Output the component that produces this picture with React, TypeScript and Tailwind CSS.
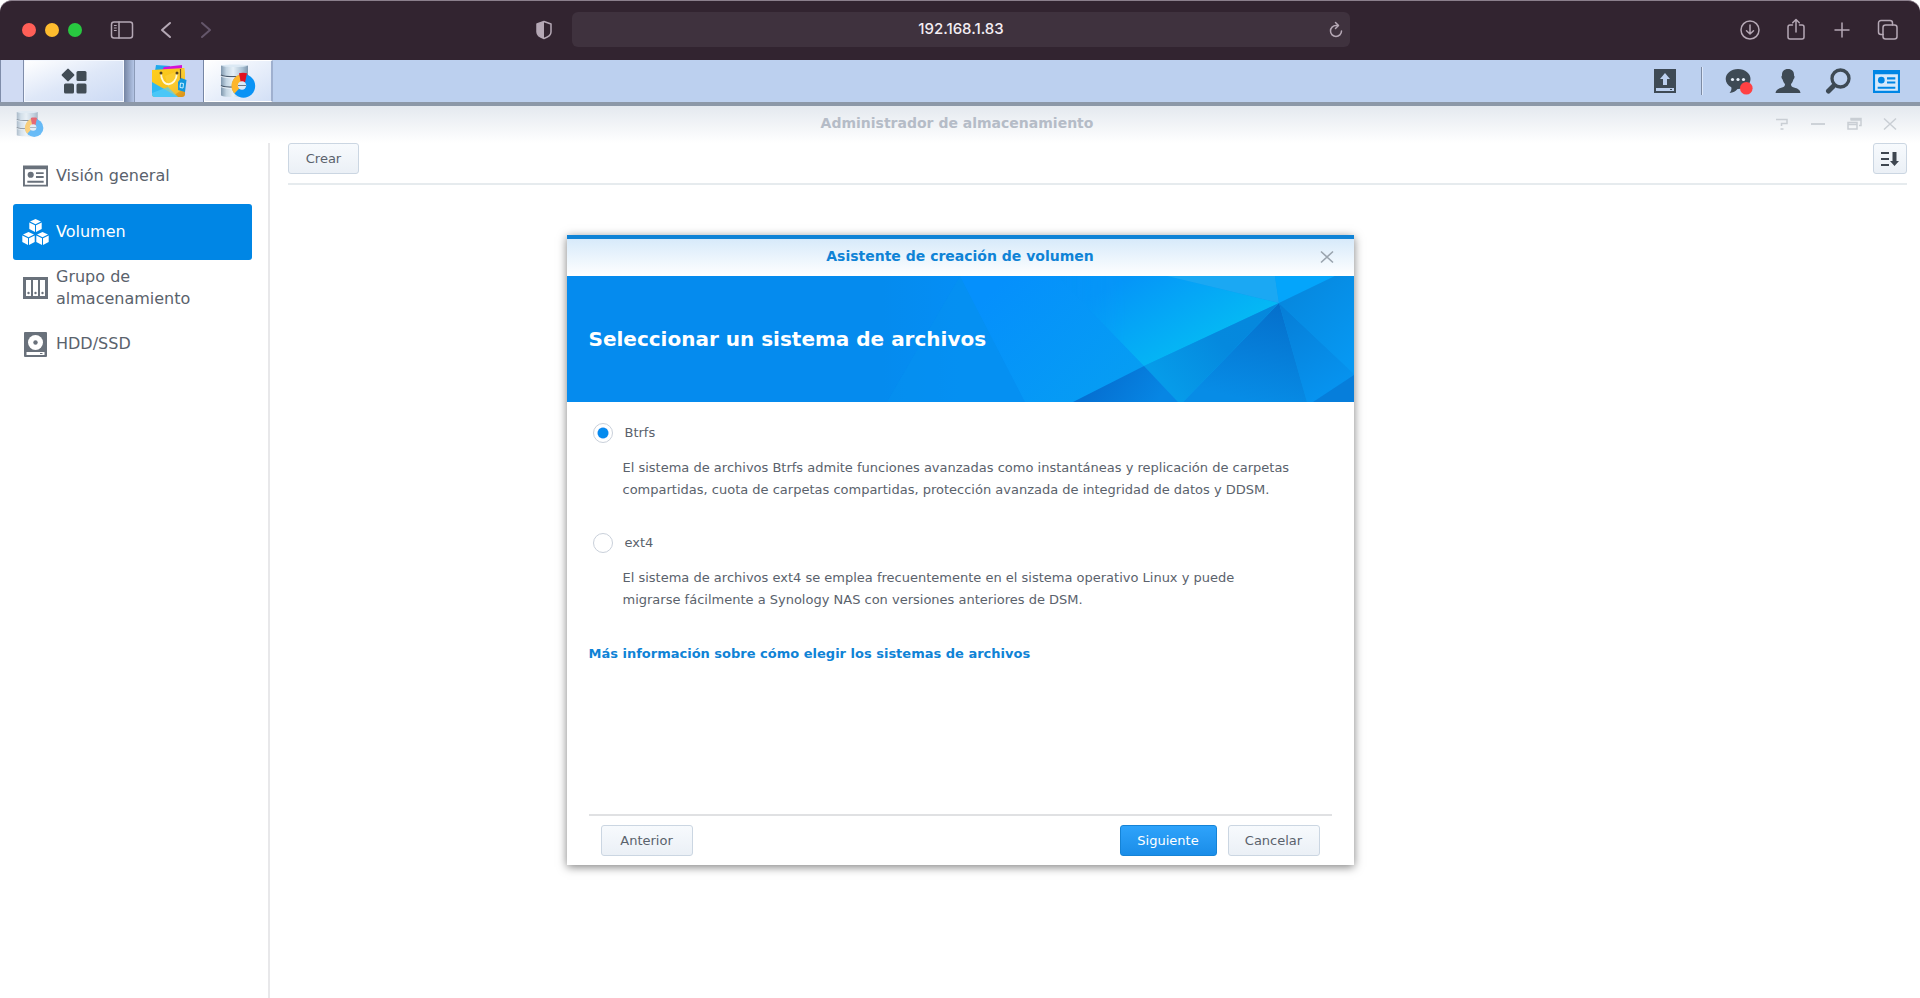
import { Fragment, useState } from "react";
import type { ReactNode } from "react";

const iconStroke = {
  fill: "none",
  stroke: "#b5a8b5",
  strokeWidth: 1.5,
  strokeLinecap: "round" as const,
  strokeLinejoin: "round" as const,
};

function StorageIcon({ className }: { className: string }) {
  return (
    <svg viewBox="0 0 36 36" className={className} aria-hidden="true">
      <defs>
        <linearGradient id="cyl" x1="0" x2="1" y1="0" y2="0">
          <stop offset="0" stopColor="#7f97ad" />
          <stop offset="0.2" stopColor="#c3d5e3" />
          <stop offset="0.45" stopColor="#e6f0f7" />
          <stop offset="0.8" stopColor="#a9c0d3" />
          <stop offset="1" stopColor="#7d95ab" />
        </linearGradient>
      </defs>
      <path d="M1 2.500v30c3 2 24 2 27 0v-30z" fill="url(#cyl)" />
      <path d="M1 2.500c3 2 24 2 27 0-3-1.500-24-1.500-27 0z" fill="#dbe9f4" />
      <path d="M1 12c3 2.200 24 2.200 27 0M1 22.500c3 2.200 24 2.200 27 0" fill="none" stroke="#4c5b6c" strokeWidth="1.300" />
      <path d="M1 13.200c3 2.200 24 2.200 27 0M1 23.700c3 2.200 24 2.200 27 0" fill="none" stroke="#f2f8fc" strokeWidth="0.800" />
      <circle cx="23.500" cy="23" r="11.700" fill="#0a93f5" />
      <path d="M22 22.500 19.500 11.500C15 13 11 18 11.500 24c.2 3 1.500 5 3 6.500z" fill="#fdb62c" />
      <path d="M20.800 19.500 19 10.300c2.500-.7 5.500-.7 8 0l-2 9.200z" fill="#e3101f" />
      <circle cx="22" cy="22.500" r="4.200" fill="#dce9f6" />
      <path d="M18 22.500h8" stroke="#4c5b6c" strokeWidth="0.800" />
    </svg>
  );
}

function PackageIcon() {
  return (
    <svg viewBox="0 0 36 36" className="size-9" aria-hidden="true">
      <defs>
        <linearGradient id="bag" x1="0" x2="1" y1="0" y2="1">
          <stop offset="0" stopColor="#ffcf1b" />
          <stop offset="0.55" stopColor="#f6c21f" />
          <stop offset="1" stopColor="#d98f1b" />
        </linearGradient>
      </defs>
      <path d="M5 2l14 1v5H4z" fill="#1fa9ec" />
      <path d="M13 4l18-2v7H10z" fill="#d312d8" />
      <path d="M1 7l32-2 1 5v21a3 3 0 0 1-3 3H4a3 3 0 0 1-3-3z" fill="url(#bag)" />
      <path d="M14 13 34 5v20L20 34z" fill="#ffd23a" opacity="0.600" />
      <path d="M1 19l26 15H4a3 3 0 0 1-3-3z" fill="#2fb9f3" />
      <path d="M1 30l16-6 10 10H4a3 3 0 0 1-3-3z" fill="#56cdf8" opacity="0.700" />
      <path d="M10 10c0 15 15 15 16 0" fill="none" stroke="#fff9dc" strokeWidth="1.800" strokeLinecap="round" />
      <circle cx="10" cy="10" r="1.500" fill="#53411d" />
      <circle cx="26" cy="10" r="1.500" fill="#53411d" />
      <path d="M29.500 6v10" stroke="#6d5322" strokeWidth="1.200" />
      <path d="M27 19l3-4 5.500 2L34 29l-7-2z" fill="#1297dd" />
      <path d="M29.500 20l3 .5-.5 4.500-3-.5z" fill="none" stroke="#c9efff" />
    </svg>
  );
}

function BrowserBar() {
  return (
    <header className="flex h-[60px] items-center rounded-t-[12px] border-t border-[#8b7f8c] bg-[#322430] pb-0.5">
      <div className="flex flex-1 items-center pl-[22px]">
        <div className="flex gap-[9px]">
          <span className="size-[14px] rounded-full bg-[#ff5f57]" />
          <span className="size-[14px] rounded-full bg-[#febc2e]" />
          <span className="size-[14px] rounded-full bg-[#28c840]" />
        </div>
        <button type="button" aria-label="Barra lateral" className="ml-7">
          <svg viewBox="0 0 24 20" className="h-5 w-6" {...iconStroke}>
            <rect x="1.500" y="2" width="21" height="16" rx="2.500" />
            <path d="M9 2v16" />
            <path d="M4.300 5.500h2M4.300 8h2M4.300 10.500h2" strokeWidth="1" />
          </svg>
        </button>
        <button type="button" aria-label="Atrás" className="ml-6">
          <svg viewBox="0 0 16 20" className="h-5 w-4" {...iconStroke} strokeWidth="2">
            <path d="M12 3 4 10l8 7" />
          </svg>
        </button>
        <button type="button" aria-label="Adelante" className="ml-6">
          <svg viewBox="0 0 16 20" className="h-5 w-4" {...iconStroke} stroke="#64566a" strokeWidth="2">
            <path d="M4 3l8 7-8 7" />
          </svg>
        </button>
        <button type="button" aria-label="Privacidad" className="mr-5 ml-auto">
          <svg viewBox="0 0 16 20" className="h-5 w-4" {...iconStroke}>
            <path d="M8 1.500 15 4v8c0 3-4 5.500-7 6.500C5 17.500 1 15 1 12V4z" />
            <path d="M8 1.500V18.500C5 17.500 1 15 1 12V4z" fill="#b5a8b5" stroke="none" />
          </svg>
        </button>
      </div>
      <div className="flex h-[35px] w-[40.5%] items-center rounded-md bg-[#3f323e] px-[6px]">
        <input
          type="text"
          aria-label="Dirección"
          defaultValue="192.168.1.83"
          className="ml-4 min-w-0 flex-1 bg-transparent text-center font-[Inter,sans-serif] text-[15px] font-medium text-[#f3edf3] outline-none"
        />
        <button type="button" aria-label="Volver a cargar">
          <svg viewBox="0 0 16 18" className="h-[18px] w-4" {...iconStroke}>
            <path d="M13.500 10A5.500 5.500 0 1 1 8 4.500h2" />
            <path d="M7.500 1.500l3 3-3 3" />
          </svg>
        </button>
      </div>
      <div className="mr-[-4px] flex flex-1 items-center justify-end gap-[22px] pr-6">
        <button type="button" aria-label="Descargas">
          <svg viewBox="0 0 24 24" className="size-6" {...iconStroke}>
            <circle cx="12" cy="12" r="9" />
            <path d="M12 7v9M8.500 12.700 12 16l3.500-3.300" />
          </svg>
        </button>
        <button type="button" aria-label="Compartir">
          <svg viewBox="0 0 24 24" className="size-6" {...iconStroke}>
            <path d="M8.500 7H6a2 2 0 0 0-2 2v10a2 2 0 0 0 2 2h12a2 2 0 0 0 2-2V9a2 2 0 0 0-2-2h-2.500" />
            <path d="M12 14V1.500M8.700 4.700 12 1.500l3.300 3.200" />
          </svg>
        </button>
        <button type="button" aria-label="Pestaña nueva">
          <svg viewBox="0 0 24 24" className="size-6" {...iconStroke}>
            <path d="M12 5v14M5 12h14" />
          </svg>
        </button>
        <button type="button" aria-label="Pestañas">
          <svg viewBox="0 0 24 24" className="size-6" {...iconStroke}>
            <rect x="7" y="7" width="14" height="14" rx="2.500" />
            <path d="M7 16.500H5A2.500 2.500 0 0 1 2.500 14V5A2.500 2.500 0 0 1 5 2.500h9A2.500 2.500 0 0 1 16.500 5v2" />
          </svg>
        </button>
      </div>
    </header>
  );
}

function CardIcon({ className }: { className: string }) {
  return (
    <svg viewBox="0 0 26 22" className={className} fill="currentColor" aria-hidden="true">
      <path fillRule="evenodd" d="M0 0h26v22H0zM2 4v16h22V4z" />
      <circle cx="8" cy="9.700" r="3.200" />
      <path d="M13.500 7h8v2h-8zM13.500 11h8v2h-8zM4.500 16h17v2h-17z" />
    </svg>
  );
}

function Taskbar() {
  return (
    <nav className="flex h-[46px] items-stretch border-b-4 border-[#8c98a8] bg-[#bcd0ef]">
      <div className="w-6 border-x border-[#7f8daa] bg-[#d0dbf3]" />
      <button
        type="button"
        aria-label="Menú principal"
        className="flex w-[100px] items-center justify-center border border-[#f4f8ff] bg-linear-to-br from-white via-[#dfe8f8] to-[#ccdaf4]"
      >
        <svg viewBox="0 0 26 26" className="size-[26px]" fill="#414c55" aria-hidden="true">
          <rect x="2.200" y="2.200" width="9.600" height="9.600" rx="1" transform="rotate(45 7 7)" />
          <rect x="15.500" y="3" width="10" height="10" rx="1.500" />
          <rect x="3" y="15.500" width="10" height="10" rx="1.500" />
          <rect x="15.500" y="15.500" width="10" height="10" rx="1.500" />
        </svg>
      </button>
      <div className="w-[11px] border-r border-[#8c9bb8] bg-linear-to-r from-[#7585a3] to-[#b4c5e6]" />
      <button
        type="button"
        aria-label="Centro de paquetes"
        className="flex w-[69px] items-center justify-center border-r border-[#7686a5] bg-[#c8d5f2]"
      >
        <PackageIcon />
      </button>
      <button
        type="button"
        aria-label="Administrador de almacenamiento"
        className="flex w-[69px] items-center justify-center border border-r-2 border-white border-r-[#9fb0cf] bg-linear-to-br from-white to-[#d3e0f6]"
      >
        <StorageIcon className="size-9" />
      </button>
      <div className="ml-auto flex items-center pr-5 text-[#3e4a55]">
        <button type="button" aria-label="Cargas">
          <svg viewBox="0 0 24 26" className="h-[26px] w-6" fill="currentColor" aria-hidden="true">
            <path
              fillRule="evenodd"
              d="M1 1h22v24H1zM12 5l-5 6h3v6h4v-6h3zM3 20v3h18v-3zM17 21h2v1h-2z"
            />
          </svg>
        </button>
        <span className="mr-[22px] ml-6 h-7 w-0.5 border-r border-[#dde8fa] bg-[#7d8ba3]" />
        <button type="button" aria-label="Notificaciones">
          <svg viewBox="0 0 28 28" className="size-7" aria-hidden="true">
            <path d="M13 2C6 2 .7 6.500.7 12c0 3.600 2.200 6.500 5.600 8.300.6 2.200-.3 4-1.800 5.700 3.600-.3 6.300-1.800 8-4 7.400.2 13-4.200 13-10C25.500 6.500 20 2 13 2z" fill="currentColor" />
            <circle cx="7.500" cy="12.500" r="1.600" fill="#e8f0fb" />
            <circle cx="13" cy="12.500" r="1.600" fill="#e8f0fb" />
            <circle cx="18.500" cy="12.500" r="1.600" fill="#e8f0fb" />
            <circle cx="21.300" cy="21.300" r="6.300" fill="#ff4143" />
          </svg>
        </button>
        <button type="button" aria-label="Usuario" className="ml-[22px]">
          <svg viewBox="0 0 26 26" className="size-[26px]" fill="currentColor" aria-hidden="true">
            <path d="M13 1c4.400 0 6.300 2.700 6 6.800.9.200.7 2.500-.6 3.700-.6 2.200-1.400 3.700-2.400 4.500 0 2 .6 2.700 3 3.500 3.700 1.200 6 2 6.500 5.500H.5c.5-3.500 2.800-4.300 6.500-5.500 2.400-.8 3-1.500 3-3.500-1-.8-1.800-2.300-2.400-4.500-1.300-1.200-1.500-3.500-.6-3.700C6.700 3.700 8.600 1 13 1z" />
          </svg>
        </button>
        <button type="button" aria-label="Buscar" className="ml-6">
          <svg viewBox="0 0 26 26" className="size-[26px]" fill="none" stroke="currentColor" aria-hidden="true">
            <circle cx="15.500" cy="10.500" r="8.500" strokeWidth="3.300" />
            <path d="M9.500 16.500 7.500 18.500" strokeWidth="3" />
            <path d="M8 18.500 3.500 23" strokeWidth="5" strokeLinecap="round" />
          </svg>
        </button>
        <button type="button" aria-label="Widgets" className="ml-[22px] text-[#0086e5]">
          <CardIcon className="h-[23px] w-[27px] bg-[#d6e9fb]" />
        </button>
      </div>
    </nav>
  );
}

function WindowTitle() {
  return (
    <div className="flex h-[37px] shrink-0 items-center bg-linear-to-b from-[#e4e9ef] to-white px-4 pb-0.5">
      <div className="flex-1">
        <StorageIcon className="size-[28px] opacity-60" />
      </div>
      <h1 className="text-[14px] font-bold text-[#b5bcc7]">Administrador de almacenamiento</h1>
      <div className="flex flex-1 items-center justify-end gap-5 pr-[6px] text-[#c9ced4]">
        <button type="button" aria-label="Ayuda">
          <svg viewBox="0 0 16 16" className="size-4" fill="none" stroke="currentColor" strokeWidth="1.500">
            <path d="M2 3.500h11v4H7.500V10M6.500 13h3" />
          </svg>
        </button>
        <button type="button" aria-label="Minimizar">
          <svg viewBox="0 0 16 16" className="size-4" stroke="currentColor" strokeWidth="1.800">
            <path d="M1 8h14" />
          </svg>
        </button>
        <button type="button" aria-label="Restaurar">
          <svg viewBox="0 0 16 16" className="size-4" fill="none" stroke="currentColor" strokeWidth="1.500">
            <path d="M2 6.500h9V13H2zM2 8.500h9M5 4.500V2.500h10v7h-2M5 4h10" />
          </svg>
        </button>
        <button type="button" aria-label="Cerrar">
          <svg viewBox="0 0 16 16" className="size-4" stroke="currentColor" strokeWidth="1.500">
            <path d="M2 2.500l12 11M14 2.500l-12 11" />
          </svg>
        </button>
      </div>
    </div>
  );
}

function Cube({ x, y }: { x: number; y: number }) {
  return (
    <g transform={`translate(${x} ${y})`}>
      <path d="M6.500 0 12 2.600 6.500 5.300 1 2.600z" />
      <path d="M.3 3.600 6 6.300v6.700L.3 10zM12.700 3.600 7 6.300v6.700l5.700-3z" />
    </g>
  );
}

const navIcons: Record<string, ReactNode> = {
  overview: <CardIcon className="h-[22px] w-[25px]" />,
  volume: (
    <svg viewBox="0 0 27 27" className="size-[27px]" fill="currentColor" aria-hidden="true">
      <Cube x={7} y={0} />
      <Cube x={0} y={13} />
      <Cube x={14} y={13} />
    </svg>
  ),
  group: (
    <svg viewBox="0 0 25 22" className="h-[22px] w-[25px]" fill="currentColor" aria-hidden="true">
      <path fillRule="evenodd" d="M0 0h25v22H0zM3 3v16h5V3zM10 3v16h5V3zM17 3v16h5V3z" />
      <circle cx="5.500" cy="16" r="1.200" />
      <circle cx="12.500" cy="16" r="1.200" />
      <circle cx="19.500" cy="16" r="1.200" />
    </svg>
  ),
  disk: (
    <svg viewBox="0 0 23 25" className="h-[25px] w-[23px]" aria-hidden="true">
      <rect width="23" height="25" rx="1" fill="currentColor" />
      <circle cx="11.500" cy="10.500" r="7.500" fill="#fff" />
      <circle cx="11.500" cy="10.500" r="2.200" fill="currentColor" />
      <path d="M2.500 20h18v3h-18z" fill="#fff" />
      <path d="M16 21h2.500v1H16z" fill="currentColor" />
    </svg>
  ),
};

const navItems = [
  { id: "overview", label: "Visión general" },
  { id: "volume", label: "Volumen" },
  { id: "group", label: "Grupo de almacenamiento" },
  { id: "disk", label: "HDD/SSD" },
];

function Sidebar() {
  return (
    <aside className="w-[270px] shrink-0 border-r-2 border-[#e8e8ea] pt-[5px] pr-4 pl-[13px]">
      {navItems.map((item) => (
        <a
          key={item.id}
          href={`#${item.id}`}
          aria-current={item.id === "volume" ? "page" : undefined}
          className="group flex h-14 items-center rounded-[3px] px-[9px] text-[16px] leading-[22px] text-[#5a626c] aria-[current]:bg-[#0086e5] aria-[current]:text-white"
        >
          <span className="flex w-[27px] shrink-0 justify-center text-[#69717b] group-aria-[current]:text-white">
            {navIcons[item.id]}
          </span>
          <span className="ml-[7px] w-[150px]">{item.label}</span>
        </a>
      ))}
    </aside>
  );
}

const plainButton =
  "h-[31px] rounded-[3px] border border-[#cbd6e2] bg-linear-to-b from-[#f7fafd] to-[#ebf0f6] text-[13px] text-[#5a626c]";

function BannerArt() {
  return (
    <svg
      viewBox="0 0 787 126"
      preserveAspectRatio="xMaxYMid slice"
      className="absolute inset-0 size-full"
      aria-hidden="true"
    >
      <defs>
        <linearGradient id="base" x1="0" x2="1" y1="0" y2="0">
          <stop offset="0" stopColor="#058bee" />
          <stop offset="0.400" stopColor="#058bee" />
          <stop offset="0.500" stopColor="#058ef5" />
          <stop offset="1" stopColor="#0590f5" />
        </linearGradient>
        <linearGradient id="mid" gradientUnits="userSpaceOnUse" x1="440" y1="0" x2="560" y2="126">
          <stop offset="0" stopColor="#0590fc" />
          <stop offset="1" stopColor="#069ef2" />
        </linearGradient>
        <linearGradient id="glow" gradientUnits="userSpaceOnUse" x1="560" y1="0" x2="610" y2="85">
          <stop offset="0" stopColor="#0595f8" />
          <stop offset="1" stopColor="#05b8f4" />
        </linearGradient>
        <linearGradient id="fade" gradientUnits="userSpaceOnUse" x1="490" y1="0" x2="560" y2="0">
          <stop offset="0" stopColor="#000" />
          <stop offset="1" stopColor="#fff" />
        </linearGradient>
        <mask id="glowMask">
          <rect x="400" width="387" height="126" fill="url(#fade)" />
        </mask>
        <linearGradient id="below" gradientUnits="userSpaceOnUse" x1="712" y1="27" x2="610" y2="120">
          <stop offset="0" stopColor="#0587dc" />
          <stop offset="0.500" stopColor="#0589de" />
          <stop offset="1" stopColor="#069be9" />
        </linearGradient>
        <linearGradient id="deep" gradientUnits="userSpaceOnUse" x1="712" y1="27" x2="690" y2="126">
          <stop offset="0" stopColor="#056fcb" />
          <stop offset="1" stopColor="#078ce6" />
        </linearGradient>
        <linearGradient id="low" gradientUnits="userSpaceOnUse" x1="540" y1="90" x2="590" y2="126">
          <stop offset="0" stopColor="#0570d2" />
          <stop offset="1" stopColor="#0786e4" />
        </linearGradient>
        <linearGradient id="right" gradientUnits="userSpaceOnUse" x1="720" y1="20" x2="787" y2="80">
          <stop offset="0" stopColor="#0688df" />
          <stop offset="1" stopColor="#0698f2" />
        </linearGradient>
        <linearGradient id="wedge" gradientUnits="userSpaceOnUse" x1="712" y1="27" x2="765" y2="115">
          <stop offset="0" stopColor="#067dd6" />
          <stop offset="1" stopColor="#0693ef" />
        </linearGradient>
      </defs>
      <rect width="787" height="126" fill="url(#base)" />
      <path d="M320 126 393 0l65 126z" fill="#0691ef" opacity="0.500" />
      <path d="M393 0h394v126H458z" fill="url(#mid)" />
      <path d="M490 0h110l112 27-135 63z" fill="url(#glow)" mask="url(#glowMask)" />
      <path d="M600 0h108l4 27z" fill="#1ba8f3" />
      <path d="M708 0h60l-56 27z" fill="#04a5fb" />
      <path d="M768 0h19v98l-75-71z" fill="url(#right)" />
      <path d="M712 27l75 71v28h-47z" fill="url(#wedge)" />
      <path d="M787 99v27h-41z" fill="#067edb" />
      <path d="M712 27 616 126h124z" fill="url(#deep)" />
      <path d="M712 27 577 90l34 36h5z" fill="url(#below)" />
      <path d="M577 90l-71 36h105z" fill="url(#low)" />
    </svg>
  );
}

const options = [
  {
    id: "btrfs",
    label: "Btrfs",
    lines: [
      "El sistema de archivos Btrfs admite funciones avanzadas como instantáneas y replicación de carpetas",
      "compartidas, cuota de carpetas compartidas, protección avanzada de integridad de datos y DDSM.",
    ],
  },
  {
    id: "ext4",
    label: "ext4",
    lines: [
      "El sistema de archivos ext4 se emplea frecuentemente en el sistema operativo Linux y puede",
      "migrarse fácilmente a Synology NAS con versiones anteriores de DSM.",
    ],
  },
];

function Wizard() {
  const [selected, setSelected] = useState("btrfs");
  return (
    <section
      role="dialog"
      aria-labelledby="wizard-title"
      className="flex min-h-[630px] w-[787px] max-w-full flex-col border-t-4 border-[#0f83d6] bg-white shadow-[0_2px_9px_rgba(0,0,0,0.5)]"
    >
      <div className="flex h-[37px] items-center bg-linear-to-b from-[#d7eafa] to-white px-[19px] pb-0.5">
        <h2 id="wizard-title" className="flex-1 pl-4 text-center text-[14px] font-bold text-[#0f83d6]">
          Asistente de creación de volumen
        </h2>
        <button type="button" aria-label="Cerrar asistente">
          <svg viewBox="0 0 16 16" className="size-4" stroke="#9aa4ae" strokeWidth="1.600">
            <path d="M2 2.500l12 11M14 2.500l-12 11" />
          </svg>
        </button>
      </div>
      <div className="relative flex h-[126px] items-center bg-[#058bee] px-[22px]">
        <BannerArt />
        <h3 className="relative text-[20px] font-bold text-white">Seleccionar un sistema de archivos</h3>
      </div>
      <form className="flex flex-1 flex-col px-[22px] pt-5">
        {options.map((o) => (
          <div key={o.id} className="mb-[31px]">
            <div className="flex h-[22px] items-center pl-1">
              <input
                type="radio"
                name="filesystem"
                id={o.id}
                checked={selected === o.id}
                onChange={() => setSelected(o.id)}
                className="size-5 appearance-none rounded-full border border-[#c9d0da] bg-white checked:bg-radial checked:from-[#058bee] checked:from-[5px] checked:to-white checked:to-[6px]"
              />
              <label htmlFor={o.id} className="pl-3 text-[13px] text-[#5a626c]">
                {o.label}
              </label>
            </div>
            <p className="mt-[13px] pl-[34px] text-[13px] leading-[22px] text-[#5a626c]">
              {o.lines.map((line, i) => (
                <Fragment key={line}>
                  {i > 0 && <br />}
                  {line}
                </Fragment>
              ))}
            </p>
          </div>
        ))}
        <a href="#info" className="self-start pt-px text-[13px] leading-[22px] font-bold text-[#0f83d6]">
          Más información sobre cómo elegir los sistemas de archivos
        </a>
        <div className="mt-auto flex items-center border-t-2 border-[#e0e1e3] px-3 py-[9px]">
          <button type="button" className={`${plainButton} w-[92px]`}>
            Anterior
          </button>
          <button
            type="button"
            className="ml-auto h-[31px] w-[97px] rounded-[3px] border border-[#1583d6] bg-linear-to-b from-[#2ea3fb] to-[#1a8de8] text-[13px] text-white"
          >
            Siguiente
          </button>
          <button type="button" className={`${plainButton} ml-[11px] w-[92px]`}>
            Cancelar
          </button>
        </div>
      </form>
    </section>
  );
}

export default function App() {
  return (
    <div className="flex min-h-screen flex-col bg-white font-['DejaVu_Sans',sans-serif]">
      <BrowserBar />
      <Taskbar />
      <div className="relative flex flex-1 flex-col">
        <WindowTitle />
        <div className="flex flex-1">
          <Sidebar />
          <main className="min-w-0 flex-1 pr-[13px] pl-[18px]">
            <div className="flex items-center justify-between border-b-2 border-[#e6ebee] pb-[9px]">
              <button type="button" className={`${plainButton} w-[71px]`}>
                Crear
              </button>
              <button type="button" aria-label="Ordenar" className={`${plainButton} flex w-[34px] items-center justify-center`}>
                <svg viewBox="0 0 18 16" className="h-4 w-[18px]" fill="#3e4650" aria-hidden="true">
                  <path d="M0 1h8v2H0zM0 7h8v2H0zM0 13h8v2H0zM11.500 1h4v9H18l-4.500 5L9 10h2.500z" />
                </svg>
              </button>
            </div>
          </main>
        </div>
        <div className="absolute inset-0 flex items-center justify-center pb-1">
          <Wizard />
        </div>
      </div>
    </div>
  );
}
